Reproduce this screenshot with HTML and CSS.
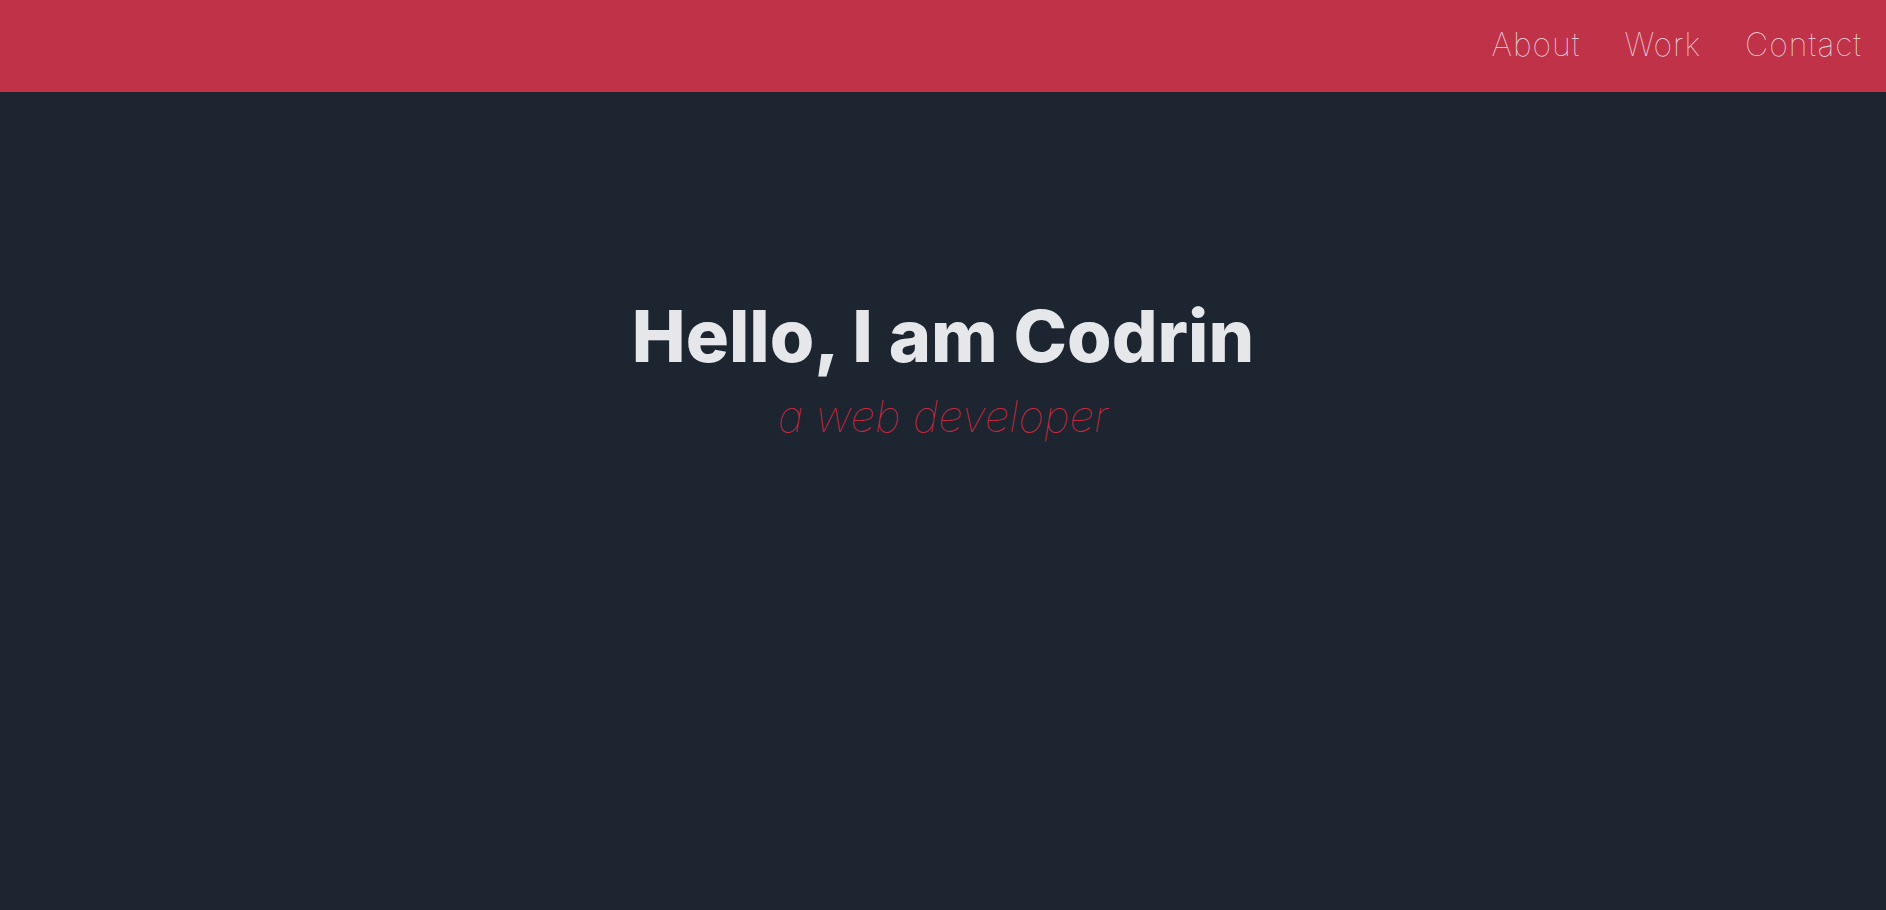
FILE: index.html
```html
<!DOCTYPE html>
<html lang="en">
<head>
<meta charset="utf-8">
<title>Codrin</title>
<link rel="stylesheet" href="styles.css">
</head>
<body>
<header class="topbar">
  <nav class="nav">
    <a class="nav-link" href="#about">About</a>
    <a class="nav-link" href="#work">Work</a>
    <a class="nav-link" href="#contact">Contact</a>
  </nav>
</header>
<main class="hero">
  <h1 class="hero-title">Hello, I am Codrin</h1>
  <p class="hero-sub">a web developer</p>
</main>
</body>
</html>
```

FILE: styles.css
```css
html, body {
  margin: 0;
  padding: 0;
  height: 100%;
}
body {
  background: #1c2530;
  font-family: "Inter", "Noto Sans", sans-serif;
}
.topbar {
  height: 92px;
  background: #c03248;
  display: flex;
  justify-content: flex-end;
  align-items: center;
  padding-right: 24px;
}
.nav {
  display: flex;
  gap: 44px;
  margin-top: -4px;
}
.nav-link {
  color: #ecdde3;
  text-decoration: none;
  font-size: 32px;
  font-weight: 100;
  letter-spacing: 1px;
}
.hero {
  display: flex;
  flex-direction: column;
  align-items: center;
}
.hero-title {
  margin: 201px 0 0;
  color: #e5e7eb;
  font-size: 72px;
  font-weight: 800;
  letter-spacing: 0;
  line-height: 1.2;
}
.hero-sub {
  margin: 11px 0 0;
  color: #c4283f;
  font-size: 44px;
  font-weight: 100;
  font-style: italic;
  line-height: 1.2;
}
```
